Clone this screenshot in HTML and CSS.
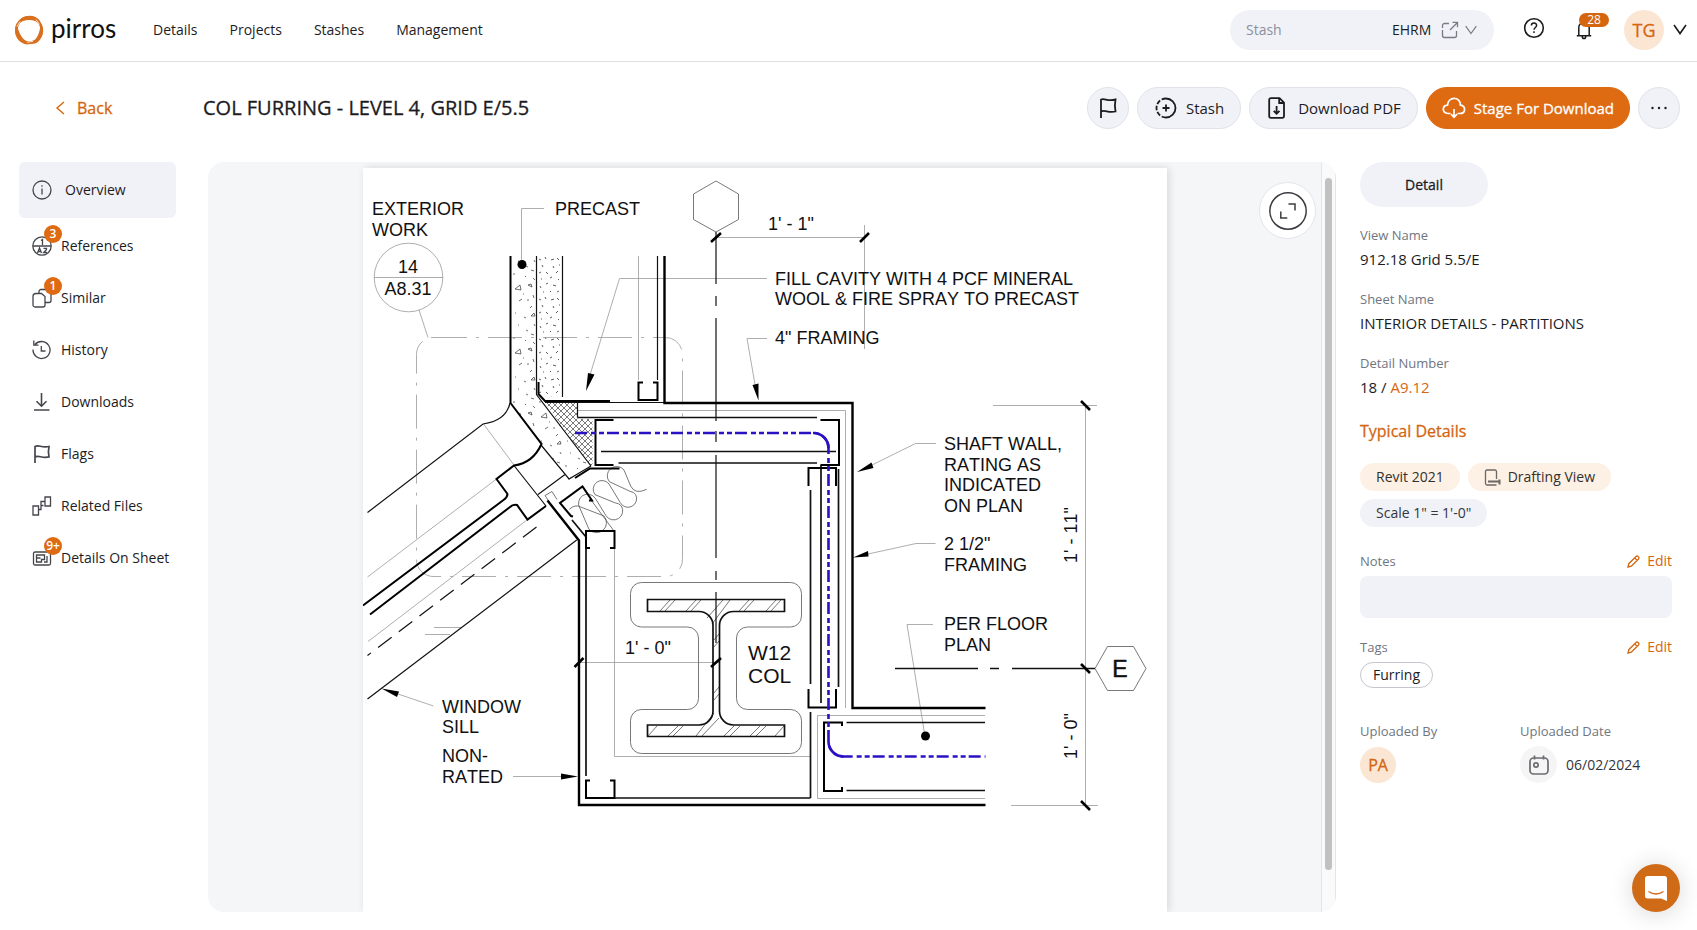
FILE: index.html
```html
<!DOCTYPE html>
<html lang="en">
<head>
<meta charset="utf-8">
<meta name="viewport" content="width=device-width, initial-scale=1">
<title>COL FURRING - LEVEL 4, GRID E/5.5 | pirros</title>
<link rel="stylesheet" href="styles.css">
</head>
<body>
<header class="topbar">
  <a class="logo" href="#">
    <svg width="30" height="30" viewBox="0 0 30 30" aria-hidden="true">
      <circle cx="15" cy="15" r="12.6" fill="none" stroke="#d9701f" stroke-width="2.6"/>
      <g fill="#d9701f">
        <path d="M3 9C7-1 21-2 26 6l1 4C21 4 12 3 3 9z"/>
        <path d="M26 7c6 7 3 18-5 21.500l-5 .8c8-5 11-14 10-22.300z"/>
        <path d="M3 8C-2 17 3 28 13 29.500l5-1C9 27 4 18 3 8z"/>
      </g>
      <path d="M22 4.500l3.500 5M3 11.500l3-5M13 27.300l6-1" stroke="#fff" stroke-width=".8"/>
    </svg>
    <span>pirros</span>
  </a>
  <nav class="mainnav" aria-label="Main">
    <a href="#">Details</a><a href="#">Projects</a><a href="#">Stashes</a><a href="#">Management</a>
  </nav>
  <div class="stashbox">
    <label for="stash">Stash</label>
    <select id="stash"><option>EHRM</option></select>
    <button class="plain" aria-label="Open stash">
      <svg width="18" height="18" viewBox="0 0 18 18" fill="none" stroke="#777b84" stroke-width="1.300"><path d="M8 2.500H3.500a2 2 0 0 0-2 2v2.500M1.500 9v5.500a2 2 0 0 0 2 2h10a2 2 0 0 0 2-2V10M9 9l7.500-7.500M11.500 1.300h5v5"/></svg>
    </button>
    <svg class="stash-chevron" width="12" height="10" viewBox="0 0 12 10" fill="none" stroke="#777b84" stroke-width="1.200"><path d="M.7 1.200L6 8.500l5.300-7.300"/></svg>
  </div>
  <button class="plain help" aria-label="Help">
    <svg width="22" height="22" viewBox="0 0 22 22" fill="none" stroke="#1c1c1f" stroke-width="1.600"><circle cx="11" cy="11" r="9.300"/><path d="M8.400 8.600c0-3.400 5.200-3.300 5.200-.2 0 2.100-2.600 2.100-2.600 4.400M11 14.300v1.700" stroke-width="1.500"/></svg>
  </button>
  <button class="plain bell" aria-label="28 notifications">
    <svg width="16" height="20" viewBox="0 0 16 20" fill="none" stroke="#1c1c1f" stroke-width="1.500"><path d="M2.800 15.500V7.500c0-6.500 10.400-6.500 10.400 0v8M.8 15.700h14.400M6.300 16.500c0 2.800 3.400 2.800 3.400 0"/></svg>
    <span class="count">28</span>
  </button>
  <button class="plain account" aria-label="Account">
    <span class="avatar large">TG</span>
    <svg width="14" height="11" viewBox="0 0 14 11" fill="none" stroke="#1c1c1f" stroke-width="1.600"><path d="M1 1l6 8.500L13 1"/></svg>
  </button>
</header>

<section class="titlebar">
  <a class="back" href="#">
    <svg width="10" height="14" viewBox="0 0 10 14" fill="none" stroke="#d4660f" stroke-width="1.400"><path d="M9 1L2 7l7 6"/></svg>
    Back
  </a>
  <h1>COL FURRING - LEVEL 4, GRID E/5.5</h1>
  <div class="actions">
    <button class="pill round" aria-label="Flag">
      <svg width="18" height="20" viewBox="0 0 18 20" fill="none" stroke="#1c1c1f" stroke-width="1.800"><path d="M2 20V1.500c4-1.500 6 2 14.500 0l-.6 6 .6 6C9 15.500 6 11 2 13.500"/></svg>
    </button>
    <button class="pill">
      <svg width="22" height="22" viewBox="0 0 22 22" fill="none" stroke="#1c1c1f" stroke-width="1.800"><path d="M11 1.500a9.500 9.500 0 0 1 0 19"/><path d="M11 1.500a9.500 9.500 0 0 0 0 19" stroke-dasharray="4.500 1.800"/><path d="M11 7.500v7M7.500 11h7"/></svg>
      Stash
    </button>
    <button class="pill pdf">
      <svg width="20" height="22" viewBox="0 0 20 22" fill="none" stroke="#1c1c1f" stroke-width="1.800"><path d="M4 1.200h8.500l4.500 4.500V19a1.800 1.800 0 0 1-1.800 1.800H4A1.800 1.800 0 0 1 2.200 19V3A1.800 1.800 0 0 1 4 1.200zM12.200 1.500V6H17M9.600 9v7.500M6.700 13.800l2.900 3 2.900-3"/></svg>
      Download PDF
    </button>
    <button class="pill primary">
      <svg width="24" height="22" viewBox="0 0 24 22" fill="none" stroke="#fff" stroke-width="1.700"><path d="M8.500 16.500H6C-.5 16 .2 8.500 5.500 8.200 6 -.8 18.500-1 18.500 8.200c5.500.8 5.500 8.300-.5 8.300h-2.500M12 12v8M9 17.200l3 3 3-3"/></svg>
      Stage For Download
    </button>
    <button class="pill round" aria-label="More">
      <svg width="18" height="4" viewBox="0 0 18 4" fill="#1c1c1f"><circle cx="2.500" cy="2" r="1.200"/><circle cx="9" cy="2" r="1.200"/><circle cx="15.500" cy="2" r="1.200"/></svg>
    </button>
  </div>
</section>

<main class="content">
  <nav class="sidenav" aria-label="Detail sections">
    <a class="current" href="#"><span class="ico"><svg width="20" height="20" viewBox="0 0 20 20"><circle cx="10" cy="10" r="9"/><path d="M10 8.500v6M10 5.200v1.600"/></svg></span>Overview</a>
    <a href="#"><span class="ico"><svg width="20" height="20" viewBox="0 0 20 20"><circle cx="10" cy="10" r="9.200"/><path d="M1 10h18M9 4.500l1.500-1V9M5.500 17l2-5 2 5M6 15.500h3M11.500 12.300h3v1.200l-2.800 3h3.300" /></svg><b class="badge">3</b></span>References</a>
    <a href="#"><span class="ico"><svg width="20" height="20" viewBox="0 0 20 20"><path d="M4 5.500h5.500l3.500 3V17a2 2 0 0 1-2 2H3a2 2 0 0 1-2-2V8.500a3 3 0 0 1 3-3zM7 5.300V3.500a2 2 0 0 1 2-2h4.500L19 6v6.500a2 2 0 0 1-2 2h-4"/></svg><b class="badge">1</b></span>Similar</a>
    <a href="#"><span class="ico"><svg width="20" height="20" viewBox="0 0 20 20"><path d="M3 4.500A8.500 8.500 0 1 1 1 9.500M1.800.5v4.700h4.700M9.300 6v5h4.200"/></svg></span>History</a>
    <a href="#"><span class="ico"><svg width="20" height="20" viewBox="0 0 20 20"><path d="M9.500 1v13M4.500 9.200l5 5 5-5M2 18h15.500" stroke-width="1.600"/></svg></span>Downloads</a>
    <a href="#"><span class="ico"><svg width="20" height="20" viewBox="0 0 20 20"><path d="M3 19V2.500c4-2 6 1.500 14 0l-.6 5.200.6 5.200c-7 1.800-10-2-14 0" stroke-width="1.700"/></svg></span>Flags</a>
    <a href="#"><span class="ico"><svg width="20" height="20" viewBox="0 0 20 20"><path d="M1 10h5.500v9H1zM13 1h5.500v9H13zM6.500 13.500H9V5.500h4M9 9.500h2.500"/></svg></span>Related Files</a>
    <a href="#"><span class="ico"><svg width="20" height="20" viewBox="0 0 20 20"><path d="M3 4h14a1.500 1.500 0 0 1 1.500 1.500v10A1.500 1.500 0 0 1 17 17H3a1.500 1.500 0 0 1-1.500-1.500v-10A1.500 1.500 0 0 1 3 4zM4.500 7h8v4.500h-3V14h-5zM4.500 10h4M15 8v6h-3"/></svg><b class="badge">9+</b></span>Details On Sheet</a>
  </nav>

  <section class="viewer" aria-label="Detail drawing">
    <div class="stage">
      <div class="paper">
        <svg class="drawing" viewBox="363 168 804 743" role="img" aria-label="Column furring detail">
          <defs>
            <pattern id="hatch" width="6" height="6" patternUnits="userSpaceOnUse"><path d="M0 0l6 6M6 0L0 6" stroke="#444" stroke-width=".7"/></pattern>
            <pattern id="concrete" x="511" y="256" width="26" height="64" patternUnits="userSpaceOnUse">
              <path d="M15 10l2 1M20 14l3 1M4 33l5-4 1 5zM17 29l3-1 1 3zM22 22l2 2M8 45l3-2M19 52l2-2M4 57l1 0M13 61l2 1M22 39l1 3M7 5l1 0M14 20l1 1M23 4l1 2M2 18l2 0M16 44l2 0M12 38l1 0M20 60l3-3 1 3z" fill="none" stroke="#333" stroke-width=".7"/>
            </pattern>
            <pattern id="sand" x="537" y="256" width="25" height="40" patternUnits="userSpaceOnUse">
              <path d="M2 3l2 1M8 1l1 2M14 4l3-1M20 2l2 2M5 9l1 2M16 10l1 2M22 9l1 0M2 17l2-1M9 16l2 2M19 17l2-2M4 23l1 0M13 22l2-1M21 24l1-1M3 30l1 2M9 28l2-1M16 29l3 1M6 36l1 0M13 35l1 1M20 36l2-1" fill="none" stroke="#333" stroke-width=".8"/>
            </pattern>
          </defs>
          <path d="M511 256h25.500v138.500L591 466l-22 14-58-77z" fill="url(#concrete)"/>
          <path d="M537 256h25v141h-19l-6-6z" fill="url(#sand)"/>
          <path d="M545 402.500h32.500V419h15v46H590z" fill="url(#hatch)"/>

          <g class="hair">
            <path d="M544 208.500h-22.500V264"/>
            <circle cx="408.500" cy="277.500" r="34.300"/><path d="M374 277.500h69M419 310l9 27.500"/>
            <path d="M767 278.500H619.500L590 375M767 338.500h-20l8 46M716 237.500h148.500M864.500 225v124"/>
            <path d="M936 443.500h-20.500L872 465M935.500 543.500H916L868 554M933 624.500h-26l18 112M433.500 706L398 694M513 776.500h50"/>
            <path d="M579 662.500h140M1085.500 405v401M993 405.500h104M1011 805.500h87"/>
            <path d="M577 410.500h268.500V708M985 715.500H817.500v83H985M614.500 548v208.500H810M638.500 256v124"/>
            <path d="M483.500 424l30.500 41M496.500 479l-129 98M527.500 519.500L368 641.500M434 627.500h27M425 634.500h25"/>
          </g>
          <path class="hair" stroke-dasharray="34 9 3 9" d="M433 337.500h232a17 17 0 0 1 17.500 17v204a17 17 0 0 1-17.500 18H434a17 17 0 0 1-17.500-18v-204a17 17 0 0 1 16.500-17z"/>
          <g class="thin">
            <path d="M716 181l22.500 13v25.500L716 232l-22.500-12.500V194z"/>
            <path d="M1095 668.500l12.500-22h26l12.500 22-12.500 22h-26z"/>
            <path d="M641.500 582.500h149a11 11 0 0 1 11 11v22.500a11 11 0 0 1-11 11h-43a11 11 0 0 0-11 11v60.500a11 11 0 0 0 11 11h43a11 11 0 0 1 11 11V742.500a11 11 0 0 1-11 11h-149a11 11 0 0 1-11-11V720.500a11 11 0 0 1 11-11h46a11 11 0 0 0 11-11V638a11 11 0 0 0-11-11h-46a11 11 0 0 1-11-11v-22.500a11 11 0 0 1 11-11z"/>
            <path d="M660 611l10-11M665 611l10-11M686 611l10-11M691 611l10-11M712 624l18-24M707 618l16-18M739 611l10-11M744 611l10-11M766 611l10-11M771 611l10-11M648 736l9-10M668 736l10-10M673 736l10-10M696 736l18-23M702 736l17-18M724 736l10-10M730 736l10-10M750 736l10-10M756 736l10-10M775 736l9-10M714 640l5-6M714 647l5-6M714 693l5-6M714 700l5-6"/>
            <path d="M545 495.500l7-4 5 8M545 495.500l4 6M614 531l-23-31"/>
            <path transform="translate(480 370) scale(.3333)" stroke-width="2.400" d="M268 418Q285 402 302 411L372 438A29 29 0 0 1 327 478L300 415A25 25 0 0 1 346 385L378 437A25 25 0 0 0 424 408Q418 400 404 398L345 374A25 25 0 1 1 387 342L421 398A24 24 0 0 0 467 374Q463 366 450 364L388 335A28 28 0 0 1 432 300L452 348Q465 375 500 358"/>
          </g>

          <g class="mid">
            <path d="M536.500 256v138.500L591 466M562.500 256v141M657.500 256v124M577.500 402v15.500M545 402.500h119M716 232v52M716 296v10M716 318v103M716 431v11M716 455v103M716 571v9M716 592v51"/>
            <path d="M510 403Q506 421 483 424L367.500 512.500M576.700 540L367.500 699M514 465.500l32 40.500M538 494.500l27-20M541 445l28 34 22-13"/>
            <path d="M536.500 527L367.500 655.500" stroke-dasharray="17 9"/>
            <path d="M895 668.500h83M990 668.500h9M1012 668.500h83" stroke-width="1.500"/>
          </g>
          <g class="line">
            <path d="M577.500 417.500H817M601 451.500h235M618.500 463H817M821 465v238M810.500 490v194M838.500 469v218M810.500 712v86M846.500 722.500H985M846.500 790.500H985M586 798h224.500M586 548v228M572 520l14 17"/>
            <path d="M647.500 599.500h137v12h-51a14 14 0 0 0-14 14v85.500a14 14 0 0 0 14 14h51v11.500h-137V725h51.500a14 14 0 0 0 14-14v-85.500a14 14 0 0 0-14-14h-51.500z"/>
          </g>
          <g class="heavy">
            <path d="M510.500 256v147l31 41Q533 463 514 465.500L496.500 479l11 15q0 3-4 6L363 605.500"/>
            <path d="M546 506l-18.500 13.500L517 505q-4-1-7 2L370 614.500"/>
            <path d="M538.500 382v12l6.500 7h65M575 478l15-9.500h29.500M643 382.500h-4.500V400h19v-17.500H653M613.500 420h-18v45h18M820.500 420H839v45h-18.500M808.500 486v-18H836v18M808.500 689v18.500H836V689M842 726v-3.500h-18V791h18v-4M590 548h-4v-17h28.500v17H610M590 780.500h-4V798h28.500v-17.500H610M573 516.500l-2-.5-11-13 22.500-16.500 9.500 14h-3"/>
            <path class="wall" d="M664.500 256v147h188v305H985.500M547.500 500.500l31.500 40V805h406.500"/>
            <path d="M711 242l10-9M860 242l9-9M574.500 667l9-9M711 667l10-9M1081 401l9 9M1081 664l9 9M1081 801l9 9" stroke-width="2.600"/>
          </g>
          <path class="rated" d="M575 433h238a15 15 0 0 1 15.500 15v294a15 15 0 0 0 15 14.500h142"/>
          <path class="rated bend" d="M813 433a15 15 0 0 1 15.500 15M828.500 742a15 15 0 0 0 15 14.500"/>
          <g class="solid">
            <circle cx="522" cy="264.500" r="4.500"/><circle cx="925.500" cy="736" r="4.500"/>
            <path d="M586 391l2-18 6.500 1.500zM758.500 400.500l-6-15.500 6-1.500zM857 472l14.500-9.500 2 5.500zM853 557.500l15-6.500.5 5.500zM381.500 688.500l17.500 3-2 5.500zM578 776.500l-17-3v6z"/>
          </g>
          <g class="note">
            <text x="372" y="215">EXTERIOR</text><text x="372" y="236">WORK</text>
            <text x="555" y="215">PRECAST</text>
            <text x="408" y="273" text-anchor="middle">14</text><text x="408" y="295" text-anchor="middle">A8.31</text>
            <text x="768" y="230">1' - 1"</text>
            <text x="775" y="285">FILL CAVITY WITH 4 PCF MINERAL</text>
            <text x="775" y="305">WOOL &amp; FIRE SPRAY TO PRECAST</text>
            <text x="775" y="344">4" FRAMING</text>
            <text x="944" y="450">SHAFT WALL,</text><text x="944" y="471">RATING AS</text><text x="944" y="491">INDICATED</text><text x="944" y="512">ON PLAN</text>
            <text x="944" y="550">2 1/2"</text><text x="944" y="571">FRAMING</text>
            <text x="944" y="630">PER FLOOR</text><text x="944" y="651">PLAN</text>
            <text x="442" y="713">WINDOW</text><text x="442" y="733">SILL</text>
            <text x="442" y="762">NON-</text><text x="442" y="783">RATED</text>
            <text x="625" y="654">1' - 0"</text>
            <text transform="translate(1077 563) rotate(-90)">1' - 11"</text>
            <text transform="translate(1077 759) rotate(-90)">1' - 0"</text>
            <text class="big" x="748" y="660">W12</text><text class="big" x="748" y="683">COL</text>
            <text class="grid" x="1120" y="677" text-anchor="middle">E</text>
          </g>
        </svg>
      </div>
      <button class="expand" aria-label="Expand">
        <svg width="38" height="38" viewBox="0 0 38 38" fill="none" stroke="#3c3d42" stroke-width="1.500"><circle cx="19" cy="19" r="18.200"/><path d="M19.500 12H26v6.500M11.800 19.500V26h6.500"/></svg>
      </button>
    </div>
    <div class="track"><div class="thumb"></div></div>
  </section>

  <aside class="info">
    <button class="tab">Detail</button>
    <dl class="fields">
      <div><dt>View Name</dt><dd>912.18 Grid 5.5/E</dd></div>
      <div><dt>Sheet Name</dt><dd>INTERIOR DETAILS - PARTITIONS</dd></div>
      <div><dt>Detail Number</dt><dd>18 / <a href="#">A9.12</a></dd></div>
    </dl>
    <h2>Typical Details</h2>
    <div class="chips">
      <span class="chip warm">Revit 2021</span>
      <span class="chip warm"><svg width="17" height="17" viewBox="0 0 17 17" fill="none" stroke="#6d6864" stroke-width="1.300"><path d="M12.500 10V2.500a1.500 1.500 0 0 0-1.500-1.500H3a1.500 1.500 0 0 0-1.500 1.500v12A1.500 1.500 0 0 0 3 16h9.500"/><path d="M4 12.500h12.500M15.500 10.500v5" stroke-width="2"/></svg>Drafting View</span>
      <span class="chip">Scale 1" = 1'-0"</span>
    </div>
    <div class="head notes-head"><label for="notes">Notes</label><button class="edit"><svg width="13" height="13" viewBox="0 0 13 13" fill="none" stroke="#d4660f" stroke-width="1.300"><path d="M1 12l.8-3.300L9 1.500c1.500-1.300 3.800.8 2.500 2.500L4.300 11.200zM7.700 3l2.500 2.400"/></svg>Edit</button></div>
    <textarea id="notes" readonly></textarea>
    <div class="head tags-head"><span>Tags</span><button class="edit"><svg width="13" height="13" viewBox="0 0 13 13" fill="none" stroke="#d4660f" stroke-width="1.300"><path d="M1 12l.8-3.300L9 1.500c1.500-1.300 3.800.8 2.500 2.500L4.300 11.200zM7.700 3l2.500 2.400"/></svg>Edit</button></div>
    <span class="tag">Furring</span>
    <div class="uploads">
      <div><span class="caption">Uploaded By</span><span class="avatar">PA</span></div>
      <div><span class="caption">Uploaded Date</span>
        <span class="date"><span class="cal"><svg width="20" height="20" viewBox="0 0 20 20" fill="none" stroke="#6b6c70" stroke-width="1.700"><rect x="1" y="3" width="18" height="16" rx="3.500"/><path d="M5.500.5v4M14.500.5v4"/><circle cx="7" cy="10" r="2.200"/></svg></span>06/02/2024</span>
      </div>
    </div>
  </aside>
</main>

<button class="chat" aria-label="Open chat">
  <svg width="22" height="25" viewBox="0 0 22 25"><path d="M2.500 0h17A2.500 2.500 0 0 1 22 2.500V25l-6-2.500H2.500A2.500 2.500 0 0 1 0 20V2.500A2.500 2.500 0 0 1 2.500 0z" fill="#fff"/><path d="M3.500 15.500q7.500 5 15 0" fill="none" stroke="#cf6a17" stroke-width="1.400"/></svg>
</button>
</body>
</html>
```
FILE: styles.css
```css
:root {
  --orange: #d4660f;
  --ink: #1c1c1f;
  --muted: #6f7680;
  --soft: #f1f2f7;
}
* { box-sizing: border-box; }
body {
  margin: 0;
  height: 100vh;
  display: flex;
  flex-direction: column;
  overflow: hidden;
  background: #fff;
  color: var(--ink);
  font: 14px/20px "Open Sans", "Noto Sans", sans-serif;
}
a { color: inherit; text-decoration: none; }
button, select, textarea { font: inherit; color: inherit; }
svg { display: block; flex: none; }
.plain { background: none; border: 0; padding: 0; display: flex; align-items: center; }

/* medium weight, which the text face does not ship */
h1, h2, .primary, .tab, .avatar, .back { -webkit-text-stroke: .3px currentColor; }

.topbar {
  height: 62px;
  flex: none;
  display: flex;
  align-items: center;
  padding: 0 10px 2px 14px;
  border-bottom: 1px solid #dfdfe1;
}
.logo { display: flex; align-items: center; gap: 7px; width: 139px; }
.logo span { font: 26px/30px Lato, sans-serif; padding-bottom: 4px; color: #111; }
.mainnav { display: flex; gap: 32px; flex: 1; }
.stashbox {
  width: 264px;
  height: 40px;
  border-radius: 20px;
  background: var(--soft);
  display: flex;
  align-items: center;
  padding: 0 17px 0 16px;
  margin-right: 29px;
}
.stashbox label { flex: 1; color: #8b909c; }
.stashbox select { appearance: none; border: 0; background: none; padding: 0; margin-right: 9px; }
.stash-chevron { margin-left: 6px; }
.help { margin-right: 31px; padding-bottom: 4px; }
.bell { position: relative; margin-right: 32px; }
.count {
  position: absolute;
  left: 3px;
  top: -7px;
  width: 30px;
  height: 14px;
  border-radius: 7px;
  background: #d6650f;
  color: #fff;
  font-size: 12px;
  line-height: 14px;
}
.avatar {
  width: 36px;
  height: 36px;
  border-radius: 50%;
  background: #fbe6d3;
  color: var(--orange);
  font-size: 16px;
  display: flex;
  align-items: center;
  justify-content: center;
}
.avatar.large { width: 40px; height: 40px; font-size: 18px; }
.account { gap: 9px; }

.titlebar { flex: none; display: flex; align-items: center; padding: 25px 17px 33px 55px; }
.back { display: flex; align-items: center; gap: 12px; width: 148px; font-size: 16px; color: var(--orange); }
h1 { margin: 0; flex: 1; font-size: 20px; line-height: 28px; font-weight: 500; }
.actions { display: flex; gap: 8px; }
.pill {
  height: 42px;
  border: 1px solid #e1e3ea;
  border-radius: 21px;
  background: var(--soft);
  display: flex;
  align-items: center;
  gap: 9px;
  padding: 0 16px 0 17px;
  font-size: 15px;
}
.pill.round { width: 42px; padding: 0; justify-content: center; }
.pill.pdf { gap: 11px; }
.pill.primary { background: #de6a12; border-color: #de6a12; color: #fff; gap: 8px; padding: 0 15px; }

.content {
  flex: 1;
  min-height: 0;
  display: grid;
  grid-template-columns: 157px 1fr 312px;
  padding: 0 25px 18px 19px;
}
.sidenav { display: flex; flex-direction: column; }
.sidenav a { height: 52px; display: flex; align-items: center; gap: 9px; padding-left: 13px; white-space: nowrap; }
.sidenav a.current { height: 56px; margin-bottom: 2px; gap: 13px; background: var(--soft); border-radius: 6px; }
.ico { position: relative; }
.ico svg { fill: none; stroke: #45464c; stroke-width: 1.3; }
.badge {
  position: absolute;
  left: 12px;
  top: -11px;
  width: 18px;
  height: 18px;
  border-radius: 50%;
  background: #de6a12;
  color: #fff;
  font-size: 12px;
  line-height: 18px;
  font-weight: 600;
  text-align: center;
}

.viewer {
  margin: 0 24px 0 32px;
  border-radius: 16px;
  overflow: hidden;
  display: flex;
  background: #f4f6f8;
}
.stage { position: relative; flex: 1; padding-top: 6px; }
.paper { max-width: 804px; height: 100%; margin: 0 auto; background: #fff; box-shadow: 2px 0 8px rgba(0, 0, 0, .12); }
.drawing { width: 100%; height: auto; }
.expand {
  position: absolute;
  right: 5px;
  top: 20px;
  width: 57px;
  height: 57px;
  border-radius: 50%;
  border: 1px solid #e4e5e8;
  background: #fff;
  display: grid;
  place-items: center;
  padding: 0;
}
.track { width: 15px; background: #fafafa; border: solid #e4e5e7; border-width: 0 1px; padding: 16px 3px 42px; }
.thumb { height: 100%; border-radius: 4px; background: #c1c1c1; }

.hair, .thin, .mid, .line, .heavy, .rated { fill: none; stroke: #111; }
.hair { stroke: #999; stroke-width: .8; }
.thin { stroke: #555; stroke-width: .8; }
.mid { stroke-width: 1.2; }
.line { stroke-width: 1.7; }
.heavy { stroke: #000; stroke-width: 2; }
.wall { stroke-width: 2.4; }
.rated { stroke: #2a12c4; stroke-width: 2.6; stroke-dasharray: 12 4 5 3 5 3; }
.rated.bend { stroke-dasharray: none; }
.solid { fill: #000; }
.note { font: 18px "Liberation Sans", Arial, sans-serif; font-kerning: none; fill: #111; }
.note .big { font-size: 21px; }
.note .grid { font-size: 23px; stroke: #111; stroke-width: .5; }

.info { display: flex; flex-direction: column; align-items: stretch; }
.tab { align-self: flex-start; width: 128px; height: 45px; border: 0; border-radius: 23px; background: var(--soft); }
.fields { margin: 18px 0 0; display: grid; gap: 19px; }
.fields dt, .caption, .head { font-size: 13px; line-height: 20px; color: var(--muted); }
.fields dd { margin: 3px 0 0; font-size: 15px; line-height: 22px; }
.fields a { color: var(--orange); }
h2 { margin: 21px 0 20px; font-size: 16px; line-height: 24px; font-weight: 500; color: var(--orange); }
.chips { display: flex; flex-wrap: wrap; gap: 8px; }
.chip { height: 28px; border-radius: 14px; padding: 0 16px; background: var(--soft); color: #333640; display: flex; align-items: center; gap: 7px; }
.chip.warm { background: #fdf0e4; color: #33302e; }
.head { display: flex; justify-content: space-between; align-items: center; height: 24px; }
.notes-head { margin-top: 22px; }
.tags-head { margin-top: 17px; }
.edit { background: none; border: 0; padding: 0; display: flex; align-items: center; gap: 7px; color: var(--orange); font-size: 14px; }
textarea { display: block; width: 100%; height: 42px; margin-top: 3px; border: 0; border-radius: 8px; background: var(--soft); resize: none; outline: 0; }
.tag { align-self: flex-start; height: 26px; margin-top: 3px; padding: 0 12px; border: 1px solid #c4c7cd; border-radius: 13px; line-height: 24px; }
.uploads { display: grid; grid-template-columns: 160px 1fr; margin-top: 33px; }
.uploads > div { display: grid; gap: 5px; }
.date { display: flex; align-items: center; gap: 9px; color: #33353b; }
.cal { width: 37px; height: 37px; border-radius: 50%; background: #f5f5f6; display: grid; place-items: center; }

.chat {
  position: fixed;
  right: 17px;
  bottom: 18px;
  width: 48px;
  height: 48px;
  border: 0;
  border-radius: 50%;
  background: #cf6a17;
  display: grid;
  place-items: center;
  padding: 0;
  box-shadow: 0 2px 24px rgba(0, 0, 0, .16);
}
```
